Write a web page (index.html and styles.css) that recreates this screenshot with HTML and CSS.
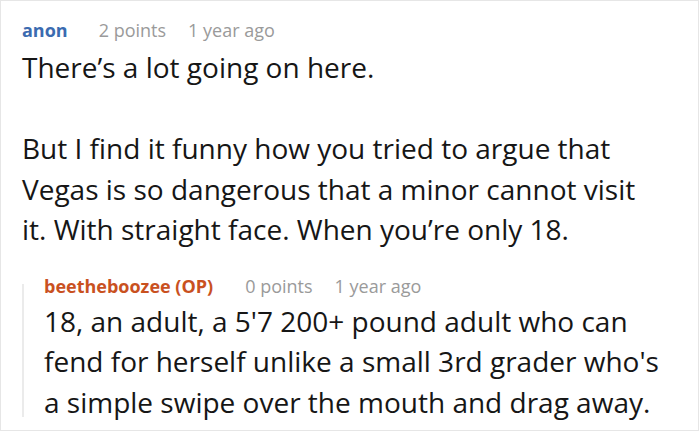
FILE: index.html
```html
<!DOCTYPE html>
<html lang="en">
<head>
    <meta charset="UTF-8">
    <title>Comments</title>
    <link rel="stylesheet" href="styles.css">
</head>
<body>
    <div class="thread">
        <div class="comment">
            <div class="meta">
                <span class="author">anon</span>
                <span class="info">2 points</span>
                <span class="info">1 year ago</span>
            </div>
            <div class="body">
                <p>There’s a lot going on here.</p>
                <p>But I find it funny how you tried to argue that<br>Vegas is so dangerous that a minor cannot visit<br>it. With straight face. When you’re only 18.</p>
            </div>
            <div class="reply">
                <div class="meta">
                    <span class="author op">beetheboozee (OP)</span>
                    <span class="info">0 points</span>
                    <span class="info">1 year ago</span>
                </div>
                <div class="body">
                    <p>18, an adult, a 5'7 200+ pound adult who can<br>fend for herself unlike a small 3rd grader who's<br>a simple swipe over the mouth and drag away.</p>
                </div>
            </div>
        </div>
    </div>
</body>
</html>
```

FILE: styles.css
```css
html, body {
    margin: 0;
    padding: 0;
    background: #ffffff;
    font-family: 'Open Sans', 'Noto Sans', sans-serif;
}
.thread {
    width: 697px;
    height: 429px;
    border: 1px solid #e6e6e6;
    overflow: hidden;
}
.comment {
    padding: 14px 0 0 21px;
}
.meta {
    display: flex;
    align-items: baseline;
    gap: 0 22px;
    margin-bottom: 2px;
    font-size: 18px;
    line-height: 30px;
    color: #9a9a9a;
}
.author {
    font-weight: bold;
    color: #3b6bb0;
    margin-right: 9px;
}
.author.op {
    color: #c9511f;
    margin-right: 10px;
}
.body p {
    margin: 0 0 40.5px;
    font-size: 28px;
    line-height: 40.5px;
    color: #161616;
}
.body p:last-child {
    margin-bottom: 0;
}
.reply {
    position: relative;
    margin-top: 21px;
    padding-left: 22px;
}
.reply .meta {
    margin-bottom: 0;
}
/* thread line, shorter than the reply itself */
.reply::before {
    content: "";
    position: absolute;
    left: 0;
    top: 13px;
    bottom: 5px;
    border-left: 2px solid #ebebeb;
}
```
